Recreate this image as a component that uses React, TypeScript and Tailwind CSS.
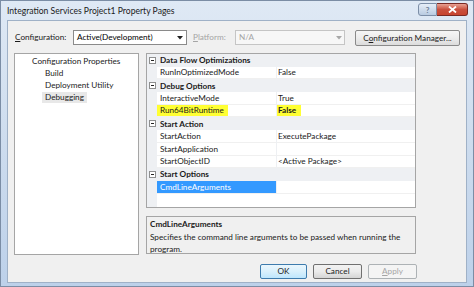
import React from "react";

function MinusBox() {
  return (
    <span className="w-[7px] h-[7px] border border-[#8e8f8f] bg-white flex items-center justify-center">
      <span className="w-[3px] h-px bg-[#222]" />
    </span>
  );
}

type Row =
  | { kind: "cat"; label: string }
  | { kind: "prop"; name: string; value: string; bold?: boolean; hl?: boolean; sel?: boolean };

const rows: Row[] = [
  { kind: "cat", label: "Data Flow Optimizations" },
  { kind: "prop", name: "RunInOptimizedMode", value: "False" },
  { kind: "cat", label: "Debug Options" },
  { kind: "prop", name: "InteractiveMode", value: "True" },
  { kind: "prop", name: "Run64BitRuntime", value: "False", bold: true, hl: true },
  { kind: "cat", label: "Start Action" },
  { kind: "prop", name: "StartAction", value: "ExecutePackage" },
  { kind: "prop", name: "StartApplication", value: "" },
  { kind: "prop", name: "StartObjectID", value: "<Active Package>" },
  { kind: "cat", label: "Start Options" },
  { kind: "prop", name: "CmdLineArguments", value: "", sel: true },
];

function GridRow({ r }: { r: Row }) {
  if (r.kind === "cat") {
    return (
      <div className="flex h-[12.7px] items-center bg-[#eef0f3]">
        <div className="w-[10px] h-full flex items-center justify-center">
          <MinusBox />
        </div>
        <div className="pl-[3px] font-bold text-[#1a1a1a] leading-none">{r.label}</div>
      </div>
    );
  }
  return (
    <div className="flex h-[12.7px] items-stretch">
      <div className="w-[10px] bg-[#eef0f3]" />
      <div
        className={`w-[119px] flex items-center border-b border-[#f0f0f0] ${
          r.sel ? "bg-[#3399ff] text-white" : "text-[#1a1a1a]"
        }`}
      >
        <span className={`leading-none pl-[3px] ${r.hl ? "bg-[#ffff33] pr-[4px] pb-[1px] pt-[1px]" : ""}`}>{r.name}</span>
      </div>
      <div className="w-px bg-[#eef0f3]" />
      <div className="flex-1 flex items-center border-b border-[#f0f0f0] text-[#1a1a1a]">
        <span
          className={`leading-none pl-[1px] ${r.bold ? "font-bold" : ""} ${
            r.hl ? "bg-[#ffff33] pr-[5px] pt-[1px] pb-[1px]" : ""
          }`}
        >
          {r.value}
        </span>
      </div>
    </div>
  );
}

function Arrow({ gray }: { gray?: boolean }) {
  return (
    <svg width="6" height="4" viewBox="0 0 6 4">
      <path d="M0 0 L6 0 L3 3.5 Z" fill={gray ? "#a8a8a8" : "#222"} />
    </svg>
  );
}

export default function App() {
  return (
    <div className="w-[474px] h-[287px] overflow-hidden bg-gradient-to-b from-[#dfe9f5] via-[#cddcee] to-[#bdd1ea] font-['Lato','Noto_Sans',sans-serif] text-[8.2px] text-black border border-[#7b8da5] flex flex-col">
      {/* Title bar */}
      <div className="h-[19px] flex items-start">
        <div className="pl-[6px] pt-[6px] text-[8.6px] leading-none text-[#1b1b1b]">
          Integration Services Project1 Property Pages
        </div>
        <div className="ml-auto mr-[5px] mt-[2px] flex">
          <div className="w-[19px] h-[13px] border border-[#7c8ea7] rounded-l-[3px] bg-gradient-to-b from-[#e6eef8] to-[#b9cbe1] flex items-center justify-center text-[8px] font-bold text-[#6b7d95] leading-none">
            ?
          </div>
          <div className="w-[31px] h-[13px] border border-l-0 border-[#7a2a24] rounded-r-[3px] bg-gradient-to-b from-[#e8a193] via-[#c9503e] to-[#c7442f] flex items-center justify-center">
            <svg width="9" height="7" viewBox="0 0 9 7">
              <path d="M1 0.5 L8 6.5 M8 0.5 L1 6.5" stroke="#fff" strokeWidth="1.8" />
            </svg>
          </div>
        </div>
      </div>

      {/* Client */}
      <div className="mx-[6px] h-[263px] bg-[#f0f0f0] border border-[#9fb1c7] flex flex-col px-[6px]">
        {/* Config row */}
        <div className="mt-[9px] h-[16px] flex items-start">
          <div className="w-[59px] h-[15px] flex items-center pl-[1px] leading-none text-[#1b1b1b]">
            <span>
              <span className="underline">C</span>onfiguration:
            </span>
          </div>
          <div className="w-[114px] h-[15px] bg-white border border-[#8a8a8a] flex items-center pl-[3px] pr-[3px] leading-none">
            <span>Active(Development)</span>
            <span className="ml-auto">
              <Arrow />
            </span>
          </div>
          <div className="ml-[6px] w-[42px] h-[15px] flex items-center leading-none text-[#a5a5a5]">
            <span>
              <span className="underline">P</span>latform:
            </span>
          </div>
          <div className="w-[110px] h-[15px] bg-[#f7f7f7] border border-[#c5c5c5] flex items-center pl-[3px] pr-[2px] leading-none text-[#a5a5a5]">
            <span>N/A</span>
            <span className="ml-auto">
              <Arrow gray />
            </span>
          </div>
          <div className="ml-[10px] w-[105px] h-[16px] rounded-[2px] border border-[#8a8a8a] bg-gradient-to-b from-[#f6f6f6] via-[#ececec] to-[#dcdcdc] flex items-center justify-center leading-none text-[#1b1b1b]">
            <span>
              C<span className="underline">o</span>nfiguration Manager...
            </span>
          </div>
        </div>

        {/* Panels */}
        <div className="mt-[7px] flex">
          {/* Tree */}
          <div className="w-[125px] h-[202px] bg-white border border-[#a5a5a5] pt-[1px] leading-none text-[#1b1b1b]">
            <div className="h-[12px] flex items-center pl-[17px]">Configuration Properties</div>
            <div className="h-[12px] flex items-center pl-[30px]">Build</div>
            <div className="h-[12px] flex items-center pl-[30px]">Deployment Utility</div>
            <div className="h-[12px] flex items-center pl-[27px]">
              <span className="bg-[#e8e8e8] px-[3px] h-[11px] flex items-center">Debugging</span>
            </div>
          </div>

          {/* Right column */}
          <div className="ml-[7px] w-[270px] flex flex-col">
            <div className="h-[155px] bg-white border border-[#a5a5a5] flex flex-col">
              {rows.map((r, i) => (
                <GridRow key={i} r={r} />
              ))}
              <div className="flex-1 flex">
                <div className="w-[10px] bg-[#eef0f3]" />
              </div>
            </div>
            <div className="mt-[8px] h-[38px] bg-[#f0f0f0] border border-[#a5a5a5] px-[3px] pt-[1px] leading-[12.5px] text-[#1b1b1b]">
              <div className="font-bold">CmdLineArguments</div>
              <div>Specifies the command line arguments to be passed when running the program.</div>
            </div>
          </div>
        </div>

        {/* Buttons */}
        <div className="mt-[9px] flex justify-end pr-[43px] leading-none">
          <div className="w-[47px] h-[15px] rounded-[2px] border border-[#3d7bad] bg-gradient-to-b from-[#eaf6fd] via-[#d9f0fc] to-[#bee6fd] flex items-center justify-center text-[#1b1b1b]">
            OK
          </div>
          <div className="ml-[6px] w-[49px] h-[15px] rounded-[2px] border border-[#707070] bg-gradient-to-b from-[#f2f2f2] via-[#ebebeb] to-[#d5d5d5] flex items-center justify-center text-[#1b1b1b]">
            Cancel
          </div>
          <div className="ml-[6px] w-[49px] h-[15px] rounded-[2px] border border-[#adb2b5] bg-[#f4f4f4] flex items-center justify-center text-[#a5a5a5]">
            <span>
              <span className="underline">A</span>pply
            </span>
          </div>
        </div>
      </div>
    </div>
  );
}
